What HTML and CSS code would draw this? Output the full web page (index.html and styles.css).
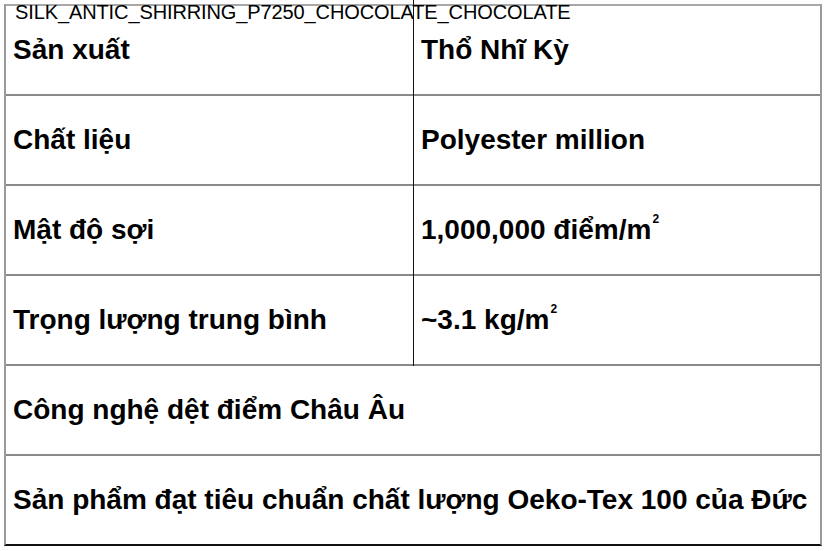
FILE: index.html
```html
<!DOCTYPE html>
<html lang="vi">
<head>
<meta charset="utf-8">
<title>SILK_ANTIC_SHIRRING_P7250_CHOCOLATE_CHOCOLATE</title>
<link rel="stylesheet" href="styles.css">
</head>
<body>
<div class="sheet">
  <div class="title">SILK_ANTIC_SHIRRING_P7250_CHOCOLATE_CHOCOLATE</div>
  <div class="spec">
    <div class="cell key">Sản xuất</div>
    <div class="cell val">Thổ Nhĩ Kỳ</div>
    <div class="cell key">Chất liệu</div>
    <div class="cell val">Polyester million</div>
    <div class="cell key">Mật độ sợi</div>
    <div class="cell val">1,000,000 điểm/m<sup>2</sup></div>
    <div class="cell key">Trọng lượng trung bình</div>
    <div class="cell val">~3.1 kg/m<sup>2</sup></div>
    <div class="cell full">Công nghệ dệt điểm Châu Âu</div>
    <div class="cell full last">Sản phẩm đạt tiêu chuẩn chất lượng Oeko-Tex 100 của Đức</div>
  </div>
</div>
</body>
</html>
```

FILE: styles.css
```css
html, body {
  margin: 0;
  padding: 0;
  background: #ffffff;
}

body {
  font-family: "Liberation Sans", Arial, sans-serif;
  color: #000;
}

.sheet {
  position: relative;
  padding: 4px 0 0 4px;
  width: 818px;
}

.title {
  position: absolute;
  top: 1px;
  left: 15px;
  font-size: 20px;
  line-height: 22px;
  font-weight: 400;
  letter-spacing: -0.11px;
  z-index: 2;
}

.spec {
  position: relative;
  display: grid;
  grid-template-columns: 407px 1fr;
  grid-template-rows: 90px 90px 90px 90px 90px 88px;
  border-top: 2px solid #a8a8a8;
  border-left: 2px solid #9a9a9a;
  border-right: 2px solid #9a9a9a;
  border-bottom: 2px solid #111;
}

.spec::before {
  content: "";
  position: absolute;
  left: 407px;
  top: -6px;
  width: 1px;
  height: 366px;
  background: #111;
  z-index: 3;
}

.cell {
  display: flex;
  align-items: center;
  font-size: 28px;
  font-weight: 700;
  border-bottom: 2px solid #8a8a8a;
  padding-left: 7px;
}

.val {
  padding-left: 8px;
}

.full {
  grid-column: 1 / -1;
}

.last {
  border-bottom: none;
}

sup {
  font-size: 12px;
  line-height: 0;
  vertical-align: 0;
  position: relative;
  top: -11px;
  margin-left: 1px;
}
```
